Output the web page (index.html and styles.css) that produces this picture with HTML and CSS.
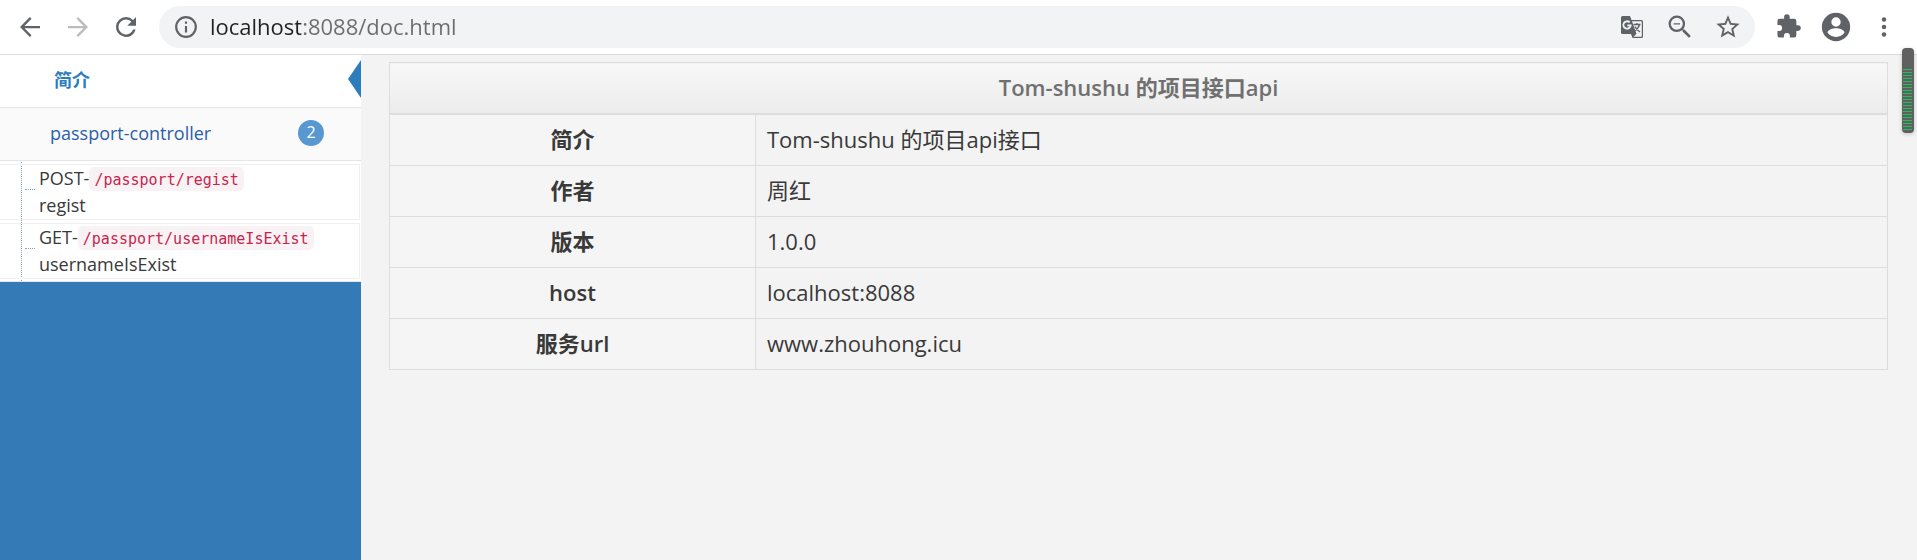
FILE: index.html
```
<!DOCTYPE html>
<html lang="zh-CN">
<head>
<meta charset="utf-8">
<meta name="viewport" content="width=device-width, initial-scale=1">
<title>Tom-shushu 的项目接口api</title>
<link rel="stylesheet" href="styles.css">
</head>
<body>
<header class="toolbar">
  <div class="nav-buttons">
    <button class="tool" type="button" aria-label="Back"><svg viewBox="0 0 24 24"><path d="M20 11.1H7.6l5.6-5.7L11.9 4 4 12l7.9 8 1.3-1.4-5.6-5.7H20z"/></svg></button>
    <button class="tool tool-disabled" type="button" aria-label="Forward" disabled><svg viewBox="0 0 24 24"><path d="M4 11.1h12.4l-5.6-5.7L12.1 4 20 12l-7.9 8-1.3-1.4 5.6-5.7H4z"/></svg></button>
    <button class="tool" type="button" aria-label="Reload"><svg viewBox="0 0 24 24"><path d="M17.65 6.35A7.96 7.96 0 0 0 12 4a8 8 0 1 0 7.73 10h-2.08A6 6 0 1 1 12 6c1.66 0 3.14.69 4.22 1.78L13 11h7V4z"/></svg></button>
  </div>
  <div class="omnibox">
    <svg class="info" viewBox="1 1 22 22"><path d="M11 17h2v-6h-2zm1-15a10 10 0 1 0 0 20 10 10 0 0 0 0-20zm0 18a8 8 0 1 1 0-16 8 8 0 0 1 0 16zM11 9h2V7h-2z"/></svg>
    <input class="address" type="text" aria-label="Address" value="localhost:8088/doc.html">
    <button class="tool" type="button" aria-label="Translate"><svg viewBox="0 0 28 28"><path d="M4.500 3H12l1.500 4H23.500A1.500 1.500 0 0 1 25 8.500v15a1.500 1.500 0 0 1-1.500 1.500H14.500L13 21H4.500A1.500 1.500 0 0 1 3 19.500v-15A1.500 1.500 0 0 1 4.500 3z"/><path class="paper" d="M14 8.300h9.200q.6 0 .6.6v14.200q0 .6-.6.6H15.500l3-3z"/><path class="line paper-mark" d="M15.500 11.500h7M19 10v1.500M21.500 11.500q-1 4-5 6.500M17 13.500q1.500 3.500 5 5.500"/><path class="line g-mark" d="M11.700 9.400a3.700 3.700 0 1 0 1 3H9.300"/></svg></button>
    <button class="tool" type="button" aria-label="Zoom out"><svg viewBox="1 1 22 22"><path d="M15.500 14h-.79l-.28-.27A6.470 6.470 0 0 0 16 9.500 6.500 6.500 0 1 0 9.500 16c1.610 0 3.090-.59 4.230-1.570l.27.28v.79l5 4.990L20.490 19zm-6 .2a4.700 4.700 0 1 1 0-9.400 4.700 4.700 0 0 1 0 9.400zM7 9h5v1H7z"/></svg></button>
    <button class="tool" type="button" aria-label="Bookmark"><svg viewBox="0 0 24 24"><path d="M22 9.240l-7.190-.62L12 2 9.190 8.630 2 9.240l5.460 4.730L5.820 21 12 17.270 18.180 21l-1.630-7.030zM12 15.400l-3.760 2.270 1-4.280-3.320-2.880 4.380-.38L12 6.100l1.710 4.040 4.380.38-3.320 2.880 1 4.280z"/></svg></button>
  </div>
  <div class="side-buttons">
    <button class="tool" type="button" aria-label="Extensions"><svg viewBox="-2 -1 27 27"><path d="M20.500 11H19V7a2 2 0 0 0-2-2h-4V3.500a2.500 2.500 0 0 0-5 0V5H4a2 2 0 0 0-2 2v3.800h1.500a2.700 2.700 0 0 1 0 5.400H2V20a2 2 0 0 0 2 2h3.800v-1.500a2.700 2.700 0 0 1 5.400 0V22H17a2 2 0 0 0 2-2v-4h1.500a2.500 2.500 0 0 0 0-5z"/></svg></button>
    <button class="tool tool-large" type="button" aria-label="Profile"><svg viewBox="0 0 24 24"><path d="M12 2a10 10 0 1 0 0 20 10 10 0 0 0 0-20zm0 3.200a3.300 3.300 0 1 1 0 6.600 3.300 3.300 0 0 1 0-6.600zm0 13.800a7.300 7.300 0 0 1-6-3.100c.1-2 4-3 6-3s5.900 1 6 3A7.300 7.300 0 0 1 12 19z"/></svg></button>
    <button class="tool" type="button" aria-label="Menu"><svg viewBox="0 0 24 24"><circle cx="12" cy="6" r="1.800"/><circle cx="12" cy="12" r="1.800"/><circle cx="12" cy="18" r="1.800"/></svg></button>
  </div>
</header>
<div class="layout">
  <nav class="sidebar">
    <a class="entry entry-active" href="#intro">简介</a>
    <a class="entry" href="#passport">passport-controller<span class="badge">2</span></a>
    <ul class="methods">
      <li><a class="method" href="#regist"><span class="line-row">POST-<code>/passport/regist</code></span><span class="line-row">regist</span></a></li>
      <li><a class="method" href="#exist"><span class="line-row">GET-<code>/passport/usernameIsExist</code></span><span class="line-row">usernameIsExist</span></a></li>
    </ul>
  </nav>
  <main class="content">
    <table class="summary">
      <thead><tr><th colspan="2">Tom-shushu 的项目接口api</th></tr></thead>
      <tbody>
        <tr><th scope="row">简介</th><td>Tom-shushu 的项目api接口</td></tr>
        <tr><th scope="row">作者</th><td>周红</td></tr>
        <tr><th scope="row">版本</th><td>1.0.0</td></tr>
        <tr><th scope="row">host</th><td>localhost:8088</td></tr>
        <tr><th scope="row">服务url</th><td>www.zhouhong.icu</td></tr>
      </tbody>
    </table>
  </main>
</div>
<div class="meter"></div>
</body>
</html>
```
FILE: styles.css
```
* { box-sizing: border-box; }

body {
  display: flex;
  flex-direction: column;
  min-height: 100vh;
  margin: 0;
  background: #f3f3f3;
  color: #393939;
  font-family: "Open Sans", "Noto Sans CJK SC", sans-serif;
  font-size: 18px;
}

/* Browser toolbar */
.toolbar {
  display: flex;
  align-items: center;
  gap: 18px;
  padding: 6px 18px 6px 15px;
  background: #fff;
  border-bottom: 1px solid #dadce0;
}
.nav-buttons { display: flex; gap: 18px; }
.side-buttons { display: flex; align-items: center; gap: 16px; }
.tool {
  width: 30px;
  height: 30px;
  padding: 0;
  border: 0;
  background: none;
}
.tool svg { display: block; width: 100%; height: 100%; fill: #5f6368; }
.tool-disabled svg { fill: #babcbe; }
.tool-large { width: 34px; height: 34px; }
.omnibox {
  display: flex;
  flex: 1;
  align-items: center;
  gap: 20px;
  height: 42px;
  padding: 0 13px 0 15px;
  background: #f1f3f4;
  border-radius: 21px;
}
.omnibox .tool { width: 28px; height: 28px; }
.info { width: 24px; height: 24px; margin-right: -8px; fill: #5f6368; }
.address {
  flex: 1;
  min-width: 0;
  padding: 0 0 2px;
  border: 0;
  outline: 0;
  background: linear-gradient(to right, #202124 91px, #6a6d71 91px);
  -webkit-background-clip: text;
  background-clip: text;
  color: transparent;
  font-family: "Open Sans", sans-serif;
  font-size: 22px;
}
.tool .paper { fill: #f1f3f4; }
.tool .line { fill: none; stroke: #5f6368; stroke-width: 1.300; }
.tool .g-mark { stroke: #f1f3f4; stroke-width: 1.800; }

/* Sidebar */
.layout { display: flex; flex: 1; }
.sidebar { width: 361px; background: #337ab7; }
.entry {
  position: relative;
  display: flex;
  align-items: center;
  justify-content: space-between;
  height: 53px;
  padding: 0 37px 2px 50px;
  background: #fafafa;
  border-bottom: 1px solid #e5e5e5;
  color: #2b5fa8;
  text-decoration: none;
}
.entry-active {
  padding-bottom: 4px;
  padding-left: 54px;
  background: #fff;
  color: #2b7dbc;
  font-weight: 700;
}
.entry-active::after {
  content: "";
  position: absolute;
  top: 5px;
  right: 0;
  width: 13px;
  height: 38px;
  background: #2b7dbc;
  clip-path: polygon(100% 0, 100% 100%, 0 50%);
}
.badge {
  width: 26px;
  height: 26px;
  border-radius: 13px;
  background: #5897d0;
  color: #fff;
  font-size: 16px;
  line-height: 24px;
  text-align: center;
}
.methods {
  position: relative;
  display: flex;
  flex-direction: column;
  gap: 3px;
  margin: 0;
  padding: 3px 1px 2px 0;
  background: #fff;
  border-bottom: 1px solid #e5e5e5;
  list-style: none;
}
.methods::before {
  content: "";
  position: absolute;
  top: 1px;
  bottom: 0;
  left: 21px;
  border-left: 1px dotted #7ba5c8;
}
.method {
  position: relative;
  display: block;
  padding: 0 0 0 39px;
  border: 1px solid #f0f0f0;
  border-left: 0;
  color: #393939;
  text-decoration: none;
}
.method::before {
  content: "";
  position: absolute;
  top: 24px;
  left: 25px;
  width: 10px;
  border-top: 1px dotted #7ba5c8;
}
.line-row { display: flex; align-items: center; height: 27px; padding-bottom: 1px; }
code {
  margin-top: 2px;
  padding: 3px 5px 1px;
  border-radius: 5px;
  background: #f9f2f4;
  color: #c7254e;
  font: 15px/20px "DejaVu Sans Mono", monospace;
}

/* Summary table */
.content { flex: 1; padding: 7px 29px 7px 28px; }
.summary {
  width: 100%;
  border-collapse: collapse;
  font-size: 22px;
  line-height: 30px;
}
.summary th, .summary td { padding: 9px 11px 11px; border: 1px solid #ddd; }
.summary th { font-weight: 600; }
.summary thead th {
  border-bottom-width: 2px;
  background: linear-gradient(#f8f8f8, #ececec);
  color: #707070;
}
.summary tbody th { width: 366px; background: #f5f5f5; }
.summary td { text-align: left; }

/* Floating level meter over the page edge */
.meter {
  position: absolute;
  top: 48px;
  right: 3px;
  width: 12px;
  height: 85px;
  padding: 21px 2px 2px 1px;
  border-radius: 4px;
  background: repeating-linear-gradient(#20c060 0 1px, transparent 1px 3px) content-box, #606060;
  box-shadow: 0 1px 4px #0003;
}
```
